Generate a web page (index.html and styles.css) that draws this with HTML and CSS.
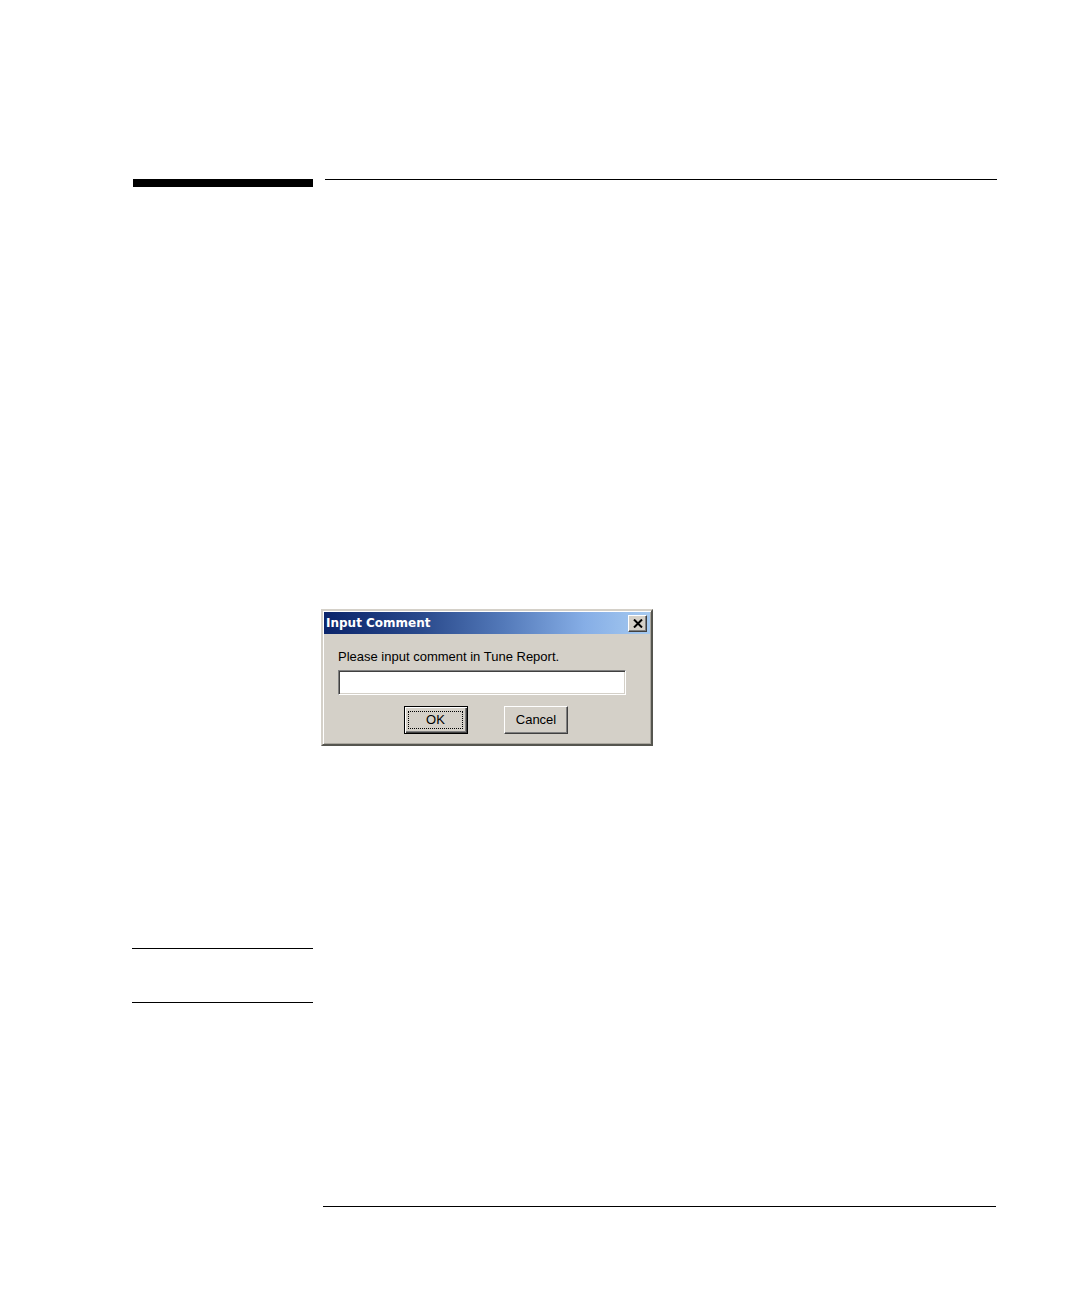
FILE: index.html
```html
<!DOCTYPE html>
<html lang="en">
<head>
    <meta charset="UTF-8">
    <meta name="viewport" content="width=device-width, initial-scale=1">
    <title>Input Comment</title>
    <link rel="stylesheet" href="styles.css">
</head>
<body>

<main class="page">
    <!-- section rules -->
    <div class="row section">
        <div class="bar"></div>
        <div class="rule"></div>
    </div>

    <!-- dialog -->
    <div class="row">
        <form class="dialog" role="dialog" aria-labelledby="dialog-title">
            <div class="titlebar">
                <h1 id="dialog-title">Input Comment</h1>
                <button type="button" class="close" aria-label="Close">
                    <svg width="10" height="9" viewBox="0 0 10 9" aria-hidden="true">
                        <path d="M1 0.5L9 8.5M9 0.5L1 8.5" stroke="#000" stroke-width="2"/>
                    </svg>
                </button>
            </div>
            <div class="content">
                <label for="comment">Please input comment in Tune Report.</label>
                <input type="text" id="comment">
                <div class="buttons">
                    <button type="submit" class="btn default"><span>OK</span></button>
                    <button type="button" class="btn">Cancel</button>
                </div>
            </div>
        </form>
    </div>

    <!-- side note -->
    <div class="row">
        <div class="note"></div>
    </div>

    <!-- footer rule -->
    <div class="row">
        <div class="rule foot"></div>
    </div>
</main>

</body>
</html>
```

FILE: styles.css
```css
* {
    margin: 0;
    padding: 0;
    box-sizing: border-box;
}

body {
    background-color: #fff;
    font-family: "Liberation Sans", Arial, sans-serif;
    font-size: 12px;
    color: #000;
}

.page {
    padding: 179px 84px 91px 132px;
}

.row {
    display: grid;
    grid-template-columns: 181px 1fr;
    column-gap: 8px;
}

.section {
    margin-bottom: 422px;
}

.bar {
    height: 8px;
    margin-left: 1px;
    background-color: #000;
}

.rule {
    grid-column: 2;
    height: 1px;
    margin-left: 4px;
    margin-right: -1px;
    background-color: #000;
}

.rule.foot {
    margin-left: 2px;
    margin-right: 0;
}

.note {
    height: 55px;
    margin-top: 202px;
    margin-bottom: 203px;
    border-top: 1px solid #000;
    border-bottom: 1px solid #000;
}

/* dialog */
.dialog {
    grid-column: 2;
    width: 332px;
    padding: 1px;
    background-color: #d4d0c8;
    border: 2px solid;
    border-color: #d4d0c8 #55554f #55554f #d4d0c8;
    box-shadow: inset 1px 1px #fff, inset -1px -1px #aaa79f;
}

.titlebar {
    display: flex;
    justify-content: space-between;
    align-items: center;
    height: 22px;
    padding: 0 3px 0 2px;
    background: linear-gradient(to right, #0a246a, #2a4a8c 30%, #5379b9 55%, #86aee6 80%, #a6caf0);
}

.titlebar h1 {
    font-family: "DejaVu Sans", Tahoma, sans-serif;
    font-size: 12px;
    font-weight: bold;
    line-height: 22px;
    color: #fff;
}

.close {
    display: flex;
    justify-content: center;
    align-items: center;
    width: 19px;
    height: 17px;
    background-color: #d4d0c8;
    border: 1px solid;
    border-color: #fff #404040 #404040 #fff;
    box-shadow: inset -1px -1px #808080;
}

.content {
    padding: 15px 24px 9px 14px;
}

.content label {
    display: block;
    font-size: 13px;
    line-height: 16px;
    white-space: nowrap;
}

.content input {
    display: block;
    width: 100%;
    height: 25px;
    margin-top: 5px;
    padding: 0 4px;
    font: inherit;
    background-color: #fff;
    border: 1px solid;
    border-color: #808080 #fff #fff #808080;
    box-shadow: inset 1px 1px #404040, inset -1px -1px #d4d0c8;
    outline: none;
}

.buttons {
    display: flex;
    justify-content: center;
    gap: 36px;
    margin-top: 11px;
    padding-left: 8px;
}

.btn {
    width: 64px;
    height: 28px;
    font-family: inherit;
    font-size: 13px;
    line-height: 16px;
    color: #000;
    background-color: #d4d0c8;
    border: 1px solid;
    border-color: #fff #404040 #404040 #fff;
    box-shadow: inset -1px -1px #808080;
}

.btn.default {
    padding: 3px 4px 4px 3px;
    border-color: #000;
    box-shadow: inset 1px 1px #fff, inset -1px -1px #404040, inset -2px -2px #808080;
}

.btn.default span {
    display: block;
    height: 18px;
    line-height: 16px;
    border: 1px dotted #000;
}
```
